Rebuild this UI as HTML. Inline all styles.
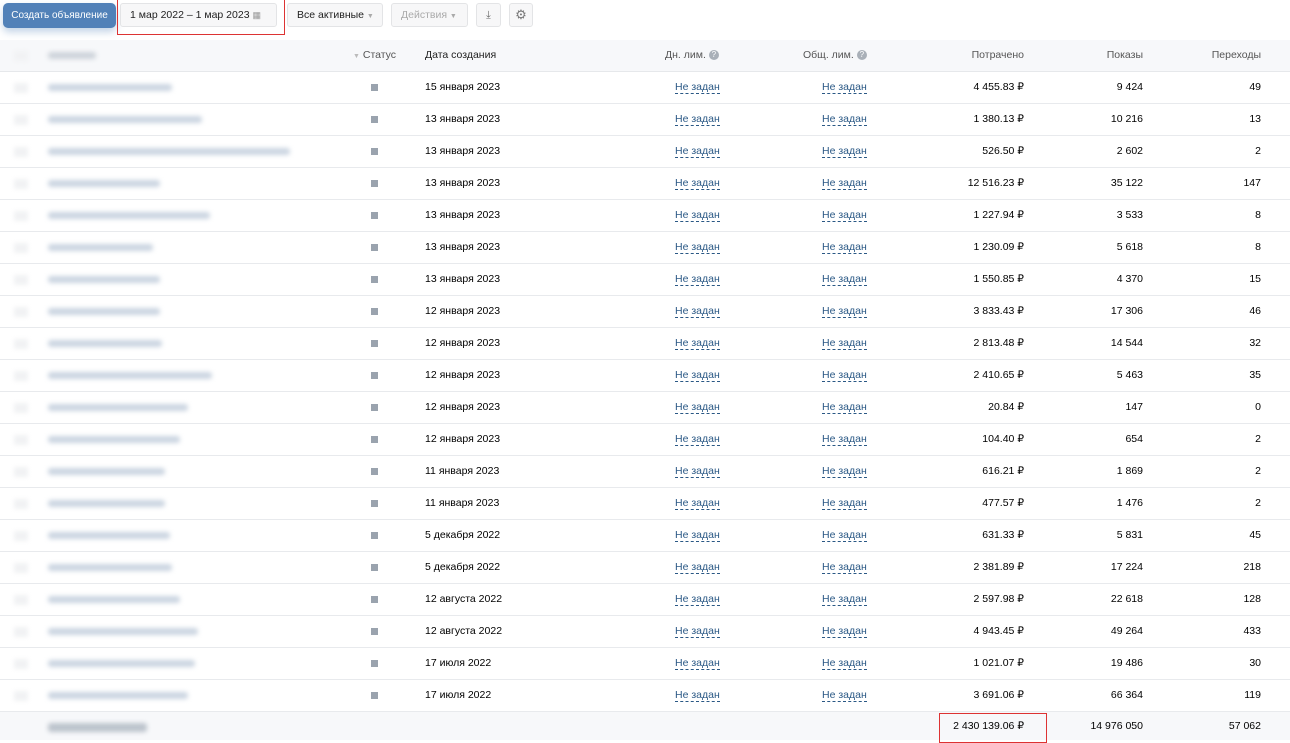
<!DOCTYPE html>
<html><head><meta charset="utf-8"><style>
*{margin:0;padding:0;box-sizing:border-box}
body{width:1290px;height:740px;overflow:hidden;background:#fff;font-family:"Liberation Sans",Arial,sans-serif;font-size:10.5px;color:#000;position:relative}
.btn{position:absolute;top:3px;height:24px;border:1px solid #e3e4e6;border-radius:3px;background:#f7f7f8;line-height:22px;font-size:10.5px;color:#222;padding:0 9px;white-space:nowrap;overflow:hidden}
.hdr{position:absolute;left:0;top:40px;width:1290px;height:32px;background:#f7f8fa;border-bottom:1px solid #e6e8eb;color:#555}
.row{position:absolute;left:0;width:1290px;height:32px;border-bottom:1px solid #e8eaed}
.c{position:absolute;top:0;line-height:31px;white-space:nowrap}
.r{text-align:right}
.bl{position:absolute;left:48px;top:12px;height:7px;background:#cbd5e1;filter:blur(2.5px);border-radius:3px}
.chk{position:absolute;left:14px;top:11px;width:14px;height:10px;background:#f1f2f4;filter:blur(2px)}
.sq{position:absolute;left:371px;top:12px;width:7px;height:7px;background:#9aa3ae}
.lk{color:#2a5885;border-bottom:1px dashed #2a5885;line-height:12px;display:inline-block;margin-top:9px}
.q{display:inline-block;width:10px;height:10px;border-radius:50%;background:#a9b0b8;color:#fff;font-size:8px;line-height:10px;text-align:center;vertical-align:1px;margin-left:3px}
</style></head><body>
<div style="position:absolute;left:3px;top:3px;width:113px;height:25px;border-radius:5px;background:#5181b8;box-shadow:0 4px 8px rgba(81,129,184,.35);color:#fff;font-size:10px;line-height:25px;text-align:center;white-space:nowrap">Создать объявление</div>
<div class="btn" style="left:120px;width:157px">1 мар 2022 – 1 мар 2023 <span style="color:#999;font-size:9px">▦</span></div>
<div style="position:absolute;left:117px;top:-1px;width:168px;height:36px;border:1px solid #d33"></div>
<div class="btn" style="left:287px;width:96px">Все активные <span style="color:#aaa;font-size:7px">▼</span></div>
<div class="btn" style="left:391px;width:77px;color:#aaa">Действия <span style="font-size:7px">▼</span></div>
<div class="btn" style="left:476px;width:25px;padding:0;text-align:center;color:#666">⤓</div>
<div class="btn" style="left:509px;width:24px;padding:0;text-align:center;color:#777;font-size:13px">⚙</div>

<div class="hdr">
<div class="chk"></div>
<div class="bl" style="width:48px;background:#cdd3da"></div>
<div class="c" style="left:353px"><span style="color:#bbb;font-size:7px">▼</span> Статус</div>
<div class="c" style="left:425px;color:#222">Дата создания</div>
<div class="c" style="left:665px">Дн. лим.<span class="q">?</span></div>
<div class="c" style="left:803px">Общ. лим.<span class="q">?</span></div>
<div class="c r" style="right:266px">Потрачено</div>
<div class="c r" style="right:147px">Показы</div>
<div class="c r" style="right:29px">Переходы</div>
</div>

<div id="rows"></div>
<script>
var d=[["15 января 2023","4 455.83 ₽","9 424","49",124],["13 января 2023","1 380.13 ₽","10 216","13",154],["13 января 2023","526.50 ₽","2 602","2",242],["13 января 2023","12 516.23 ₽","35 122","147",112],["13 января 2023","1 227.94 ₽","3 533","8",162],["13 января 2023","1 230.09 ₽","5 618","8",105],["13 января 2023","1 550.85 ₽","4 370","15",112],["12 января 2023","3 833.43 ₽","17 306","46",112],["12 января 2023","2 813.48 ₽","14 544","32",114],["12 января 2023","2 410.65 ₽","5 463","35",164],["12 января 2023","20.84 ₽","147","0",140],["12 января 2023","104.40 ₽","654","2",132],["11 января 2023","616.21 ₽","1 869","2",117],["11 января 2023","477.57 ₽","1 476","2",117],["5 декабря 2022","631.33 ₽","5 831","45",122],["5 декабря 2022","2 381.89 ₽","17 224","218",124],["12 августа 2022","2 597.98 ₽","22 618","128",132],["12 августа 2022","4 943.45 ₽","49 264","433",150],["17 июля 2022","1 021.07 ₽","19 486","30",147],["17 июля 2022","3 691.06 ₽","66 364","119",140]];
var h="";
d.forEach(function(r,i){var t=72+i*32;
h+='<div class="row" style="top:'+t+'px"><div class="chk"></div><div class="bl" style="width:'+r[4]+'px"></div><div class="sq"></div><div class="c" style="left:425px">'+r[0]+'</div><div class="c" style="left:675px"><span class="lk">Не задан</span></div><div class="c" style="left:822px"><span class="lk">Не задан</span></div><div class="c r" style="right:266px">'+r[1]+'</div><div class="c r" style="right:147px">'+r[2]+'</div><div class="c r" style="right:29px">'+r[3]+'</div></div>';});
document.getElementById("rows").innerHTML=h;
</script>
<div style="position:absolute;left:0;top:712px;width:1290px;height:28px;background:#f7f8fa">
<div class="bl" style="width:99px;top:11px;height:9px;background:#bcc3cc"></div>
<div class="c r" style="right:266px;line-height:28px">2 430 139.06 ₽</div>
<div class="c r" style="right:147px;line-height:28px">14 976 050</div>
<div class="c r" style="right:29px;line-height:28px">57 062</div>
</div>
<div style="position:absolute;left:939px;top:713px;width:108px;height:30px;border:1px solid #d33"></div>
</body></html>
